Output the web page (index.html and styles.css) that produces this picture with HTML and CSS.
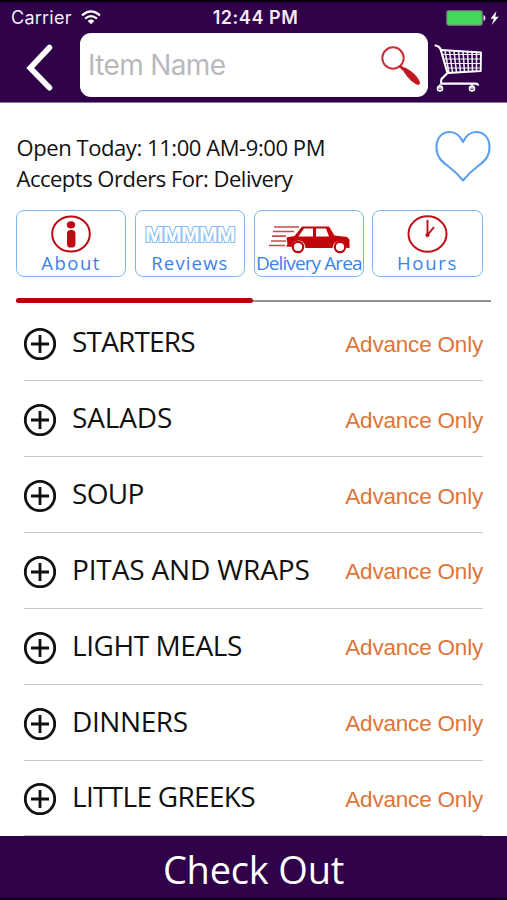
FILE: index.html
```
<!DOCTYPE html>
<html lang="en">
<head>
<meta charset="utf-8">
<title>Menu</title>
<link rel="stylesheet" href="styles.css">
</head>
<body>
<div class="app">
  <header class="header">
    <div class="status">
      <div class="carrier"><span>Carrier</span>
        <svg width="20" height="15" viewBox="0 0 20 15" fill="none" stroke="#fff" stroke-width="2.2"><path d="M1 5.3Q10-2.6 19 5.3M4.1 8.6Q10 3.5 15.9 8.6"/><path d="M6.7 11Q10 8.2 13.3 11L10 14.3Z" fill="#fff" stroke="none"/></svg>
      </div>
      <span class="time">12:44 PM</span>
      <div class="power">
        <svg width="54" height="20" viewBox="0 0 54 20"><rect x=".7" y="2.7" width="35.6" height="14.6" rx="2" fill="#46d758" stroke="#75647f" stroke-width="1.2"/><path d="M37.5 7q2 .5 2 3t-2 3z" fill="#e9e0ef"/><path d="M50.500 3l-6 7.700h3.300L45.700 17l7-8.300h-3.500z" fill="#fff"/></svg>
      </div>
    </div>
    <div class="toolbar">
      <svg class="back" width="28" height="50" viewBox="0 0 28 50" fill="none" stroke="#fff" stroke-width="5.6" stroke-linecap="round" stroke-linejoin="miter"><path d="M24.500 4.500L5.200 25 24.500 44.700"/></svg>
      <div class="search"><span>Item Name</span>
        <svg width="42" height="42" viewBox="0 0 42 42"><circle cx="13" cy="14" r="10.700" fill="none" stroke="#c9303a" stroke-width="2"/><path d="M20 22l4 4" stroke="#c01922" stroke-width="2.500"/><path d="M22 24.500q1.500-2 4-.5Q35 29 39 36q2 4-.2 4.800-1.600.5-4-1.300Q27 34.500 22 24.500z" fill="#c01922"/></svg>
      </div>
      <svg class="cart" width="52" height="52" viewBox="0 0 52 52" fill="none" stroke="#fff" stroke-linecap="round" stroke-linejoin="round">
        <path d="M2.500 3.500Q6 4 7.500 7l1.500 5 5.500 19-6 6q-1 3.500 0 4.700h33.500q2 0 3 1" stroke-width="2.200"/>
        <path d="M8 8l40 2.500-.3 18.500-33 2" stroke-width="1.900"/>
        <path d="M9.500 12.500h38M11 17h36.500M12 21.500h35M13.500 26h34" stroke-width="1.200" stroke-opacity=".9"/>
        <path d="M12 9l4 22M16.500 9l3 21.500M21 9l2.500 21.500M25.500 9.500l2 20.500M30 9.500l1.500 20.500M34.500 10l1 19.500M39 10l.5 19.500M43.500 10v19" stroke-width="1.600" stroke-opacity=".9"/>
        <circle cx="7" cy="46.500" r="2.400" stroke-width="1.800"/><circle cx="39" cy="46.500" r="2.400" stroke-width="1.800"/><path d="M7 42.500v4M39 42.500v4" stroke-width="1.500"/>
      </svg>
    </div>
  </header>

  <main class="content">
    <section class="info">
      <div class="lines"><div class="open">Open Today: 11:00 AM-9:00 PM</div><div class="accepts">Accepts Orders For: Delivery</div></div>
      <svg class="heart" width="56" height="54" viewBox="0 0 56 54" fill="none" stroke="#5b9ff0" stroke-width="2.100" stroke-linejoin="round"><path d="M28 13C31 6.500 35.500 3 41 3c8 0 13.500 6 13.500 15 0 10.500-6 15-12 19.500-6 4.500-10.500 9-14.500 14C24 46.500 19.500 42 13.500 37.500 7.500 33 1.500 28.500 1.500 18 1.500 9 7 3 14.500 3 20.500 3 25 6.500 28 13z"/></svg>
    </section>

    <nav class="tabs">
      <a class="tab about"><svg width="42" height="38" viewBox="0 0 42 38"><ellipse cx="21" cy="19" rx="18.800" ry="17.600" fill="none" stroke="#b80c13" stroke-width="2"/><ellipse cx="21" cy="9.800" rx="4.200" ry="3.600" fill="#bf0810"/><rect x="17" y="15" width="8.400" height="17.500" rx="3.600" fill="#bf0810"/></svg><span>About</span></a>
      <a class="tab reviews"><div class="rating">MMMMM</div><span>Reviews</span></a>
      <a class="tab delivery"><svg width="84" height="38" viewBox="0 0 84 38"><path d="M7 14h25M6 18.500h21M5 23.200h14M4 28h15M2 32.500h16" stroke="#c64b4c" stroke-width="1.700"/><path fill="#c1060b" fill-rule="evenodd" d="M19.500 24.500l8-1.500 7.500-9.500h27l5.500 9 12.500 1.500 2.500 2.500v8.500h-3a7 7 0 0 0-14 0H38.500a7 7 0 0 0-14-1l-5-.5v-1.500l1-.5zM37 15.500l-5.500 8h14.500v-8zM49 15.500V23.500h13l-3-8z"/><circle cx="31" cy="34" r="5.200" fill="#fff" stroke="#c1060b" stroke-width="2.200"/><circle cx="73" cy="34" r="5.200" fill="#fff" stroke="#c1060b" stroke-width="2.200"/></svg><span>Delivery Area</span></a>
      <a class="tab hours"><svg width="42" height="38" viewBox="0 0 42 38" fill="none" stroke="#bd111a"><ellipse cx="20.500" cy="19" rx="19" ry="17.800" stroke-width="2"/><path d="M20.500 5v15l6.500-8" stroke-width="1.900"/><circle cx="20.500" cy="20" r="1.600" fill="#bd111a"/></svg><span>Hours</span></a>
    </nav>

    <div class="progress"><div class="done"></div></div>

    <ul class="menu">
      <li><svg class="plus" viewBox="0 0 34 34"><circle cx="17" cy="17" r="14.700"/><path d="M17 8v18M8 17h18"/></svg><span class="name starters">STARTERS</span><span class="note">Advance Only</span></li>
      <li><svg class="plus" viewBox="0 0 34 34"><circle cx="17" cy="17" r="14.700"/><path d="M17 8v18M8 17h18"/></svg><span class="name salads">SALADS</span><span class="note">Advance Only</span></li>
      <li><svg class="plus" viewBox="0 0 34 34"><circle cx="17" cy="17" r="14.700"/><path d="M17 8v18M8 17h18"/></svg><span class="name soup">SOUP</span><span class="note">Advance Only</span></li>
      <li><svg class="plus" viewBox="0 0 34 34"><circle cx="17" cy="17" r="14.700"/><path d="M17 8v18M8 17h18"/></svg><span class="name pitas">PITAS AND WRAPS</span><span class="note">Advance Only</span></li>
      <li><svg class="plus" viewBox="0 0 34 34"><circle cx="17" cy="17" r="14.700"/><path d="M17 8v18M8 17h18"/></svg><span class="name light">LIGHT MEALS</span><span class="note">Advance Only</span></li>
      <li><svg class="plus" viewBox="0 0 34 34"><circle cx="17" cy="17" r="14.700"/><path d="M17 8v18M8 17h18"/></svg><span class="name dinners">DINNERS</span><span class="note">Advance Only</span></li>
      <li><svg class="plus" viewBox="0 0 34 34"><circle cx="17" cy="17" r="14.700"/><path d="M17 8v18M8 17h18"/></svg><span class="name greeks">LITTLE GREEKS</span><span class="note">Advance Only</span></li>
    </ul>
  </main>
  <footer class="checkout"><span>Check Out</span></footer>
</div>
</body>
</html>
```
FILE: styles.css
```
* { box-sizing: border-box; }
body { margin: 0; background: #fff; font-family: "Open Sans", "Noto Sans", sans-serif; color: #111; }
svg { display: block; flex: none; overflow: visible; }
span { white-space: nowrap; }
.app { width: 507px; height: 900px; display: flex; flex-direction: column; overflow: hidden; }

.header { height: 103px; background: #300049; border-top: 2px solid #08000c; border-bottom: 1px solid #8e7799; }
.status { height: 31px; display: grid; grid-template-columns: 1fr auto 1fr; align-items: center; padding: 0 7px 0 11px; color: #f3ecf7; font-family: Inter, "Liberation Sans", sans-serif; font-size: 18px; line-height: 31px; }
.carrier { display: flex; align-items: center; gap: 9px; }
.carrier span { letter-spacing: 0.25px; }
.time { font-weight: 600; letter-spacing: 0.55px; }
.power { justify-self: end; }
.toolbar { display: flex; align-items: flex-start; }
.back { margin: 10px 0 0 25px; }
.search { width: 348px; height: 64px; margin-left: 27px; padding: 0 6px 0 8px; background: #fff; border-radius: 11px; display: flex; align-items: center; justify-content: space-between; }
.search span { font-family: Inter, "Liberation Sans", sans-serif; font-size: 28px; color: #b9b9bd; letter-spacing: -0.65px; }
.cart { margin: 9px 0 0 5px; }

.content { flex: 1; min-height: 0; overflow: hidden; }
.info { height: 107px; padding: 26px 16px 0 16.500px; display: flex; justify-content: space-between; }
.lines { font-size: 22px; line-height: 31.2px; white-space: nowrap; padding-top: 3px; }
.open { letter-spacing: -0.430px; }
.accepts { letter-spacing: -0.500px; }
.tabs { display: flex; gap: 8.500px; padding: 0 0 0 16px; }
.tab { width: 110.300px; height: 67px; border: 1.500px solid #80b5f4; border-radius: 8px; display: flex; flex-direction: column; align-items: center; justify-content: flex-end; color: #3b82e8; }
.tab span { font-size: 18.500px; line-height: 24px; height: 25px; }
.hours svg, .about svg { margin-bottom: -2px; }
.about span { letter-spacing: 1.500px; }
.reviews span { letter-spacing: 1.150px; }
.delivery span { font-size: 19px; letter-spacing: -0.900px; }
.hours span { letter-spacing: 1.700px; }
.rating { height: 32px; line-height: 32px; font-family: "Liberation Sans", sans-serif; font-weight: bold; font-size: 22.500px; letter-spacing: -0.800px; color: #fff; -webkit-text-stroke: 2.200px #86bbf6; paint-order: stroke fill; }
.progress { width: 474.500px; height: 5px; margin: 21px 0 0 16px; display: flex; background: linear-gradient(#fff 1.500px, #91918f 1.500px 3.500px, #fff 3.500px); }
.done { width: 237px; height: 5px; border-radius: 3px; background: #b50308; }
.menu { list-style: none; margin: 2.500px 0 0; padding: 0 24px; }
.menu li { height: 75.850px; border-bottom: 1.500px solid #c9c9c9; display: flex; align-items: center; }
.plus { width: 34px; height: 34px; margin: 3px 0 0 -1px; fill: none; stroke: #111; stroke-width: 2.800; }
.name { font-size: 28px; line-height: 38px; margin-left: 15px; margin-top: -3px; letter-spacing: -0.700px; }
.starters { letter-spacing: -0.820px; }
.salads { letter-spacing: -0.150px; }
.pitas { letter-spacing: -0.150px; }
.light { letter-spacing: -0.430px; }
.dinners { letter-spacing: -0.400px; }
.note { margin-left: auto; margin-top: 4px; font-family: "Liberation Sans", sans-serif; font-size: 22.500px; letter-spacing: -0.200px; color: #dd7439; }
.checkout { height: 64px; padding-top: 3px; background: #300049; border-bottom: 2px solid #08000c; color: #fff; display: flex; align-items: center; justify-content: center; font-size: 38px; letter-spacing: -0.200px; }
```
